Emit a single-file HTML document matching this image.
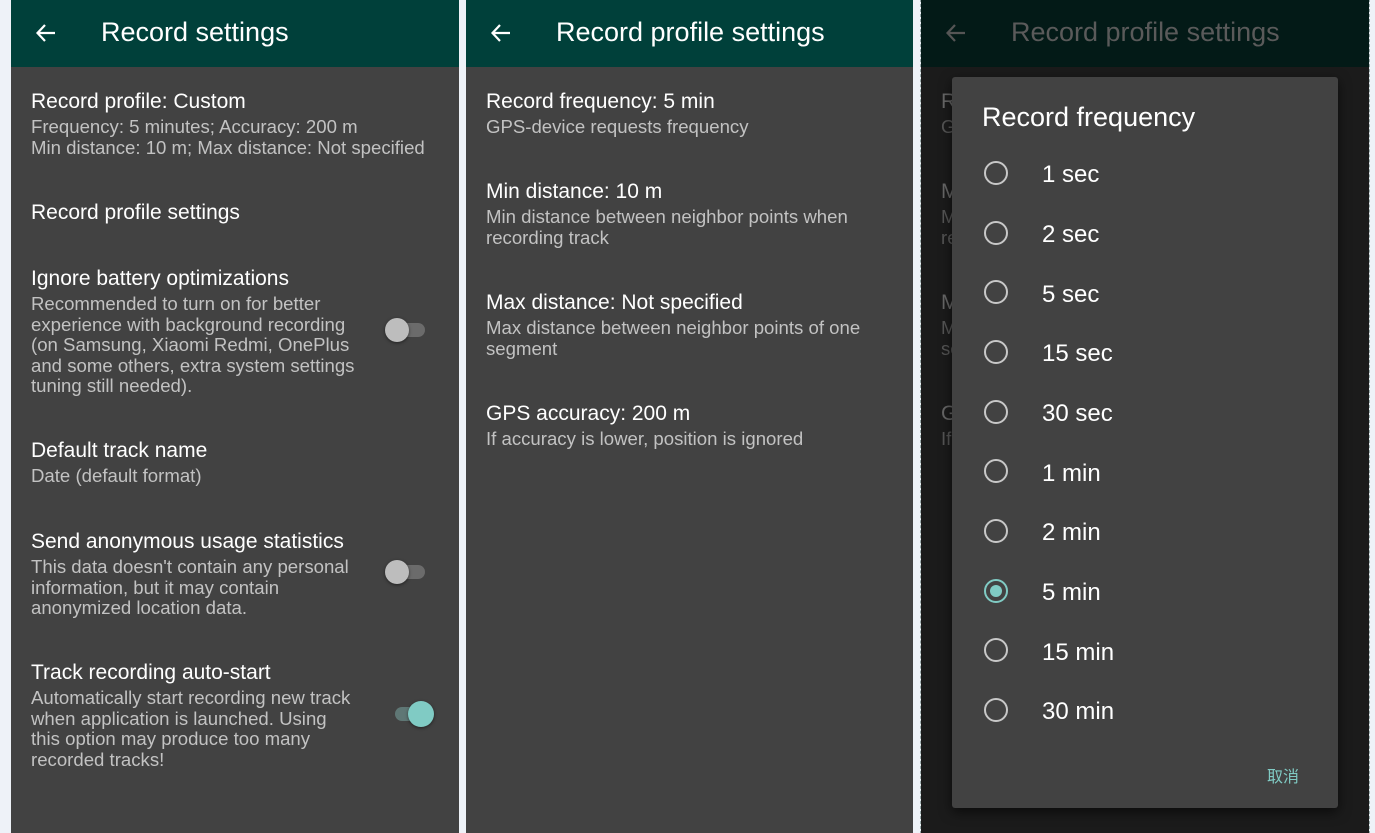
<!DOCTYPE html>
<html><head><meta charset="utf-8"><style>
*{margin:0;padding:0;box-sizing:border-box}
body{width:1375px;height:833px;background:#eef2f8;font-family:"Liberation Sans","Noto Sans CJK SC",sans-serif;position:relative;overflow:hidden}
.p{position:absolute;top:0;height:833px;background:#424242;overflow:hidden}
.h{position:absolute;left:0;right:0;top:0;height:67px;background:#00403a}
.h .t{position:absolute;left:90px;top:17px;font-size:27px;color:#fff}
.h svg{position:absolute;left:24px;top:22px}
.a{position:absolute;left:20px;color:#fff;font-size:21px;line-height:24px;white-space:nowrap}
.s{position:absolute;left:20px;color:#c2c2c2;font-size:18.6px;line-height:20.5px;white-space:nowrap}
.sw{position:absolute;width:34px;height:14px;border-radius:7px;background:#6b6b6b}
.sw i{position:absolute;top:-5px;width:24px;height:24px;border-radius:50%;background:#bdbdbd;box-shadow:0 1px 3px rgba(0,0,0,.5)}
.r{position:absolute;left:32px;width:24px;height:24px;border-radius:50%;border:2.5px solid #c8c8c8}
.rl{position:absolute;left:90px;font-size:24px;color:#fff}
</style></head><body>

<div class="p" style="left:11px;width:448px">
<div class="h"><svg width="22" height="22" viewBox="0 0 22 22"><path d="M20 11H3M10 3L2.5 11L10 19" stroke="#fff" stroke-width="2.2" fill="none"/></svg><div class="t">Record settings</div></div>
<div class="a" style="top:90px">Record profile: Custom</div>
<div class="s" style="top:117px">Frequency: 5 minutes; Accuracy: 200 m<br>Min distance: 10 m; Max distance: Not specified</div>
<div class="a" style="top:201px">Record profile settings</div>
<div class="a" style="top:267px">Ignore battery optimizations</div>
<div class="s" style="top:294px">Recommended to turn on for better<br>experience with background recording<br>(on Samsung, Xiaomi Redmi, OnePlus<br>and some others, extra system settings<br>tuning still needed).</div>
<div class="sw" style="left:380px;top:323px"><i style="left:-6px"></i></div>
<div class="a" style="top:439px">Default track name</div>
<div class="s" style="top:466px">Date (default format)</div>
<div class="a" style="top:530px">Send anonymous usage statistics</div>
<div class="s" style="top:557px">This data doesn't contain any personal<br>information, but it may contain<br>anonymized location data.</div>
<div class="sw" style="left:380px;top:565px"><i style="left:-6px"></i></div>
<div class="a" style="top:661px">Track recording auto-start</div>
<div class="s" style="top:688px">Automatically start recording new track<br>when application is launched. Using<br>this option may produce too many<br>recorded tracks!</div>
<div class="sw" style="left:384px;top:707px;background:#5f7775"><i style="left:13px;top:-6px;width:26px;height:26px;background:#80cbc4"></i></div>
</div>

<div class="p" style="left:466px;width:447px">
<div class="h"><svg width="22" height="22" viewBox="0 0 22 22"><path d="M20 11H3M10 3L2.5 11L10 19" stroke="#fff" stroke-width="2.2" fill="none"/></svg><div class="t">Record profile settings</div></div>
<div class="a" style="top:90px">Record frequency: 5 min</div>
<div class="s" style="top:117px">GPS-device requests frequency</div>
<div class="a" style="top:180px">Min distance: 10 m</div>
<div class="s" style="top:207px">Min distance between neighbor points when<br>recording track</div>
<div class="a" style="top:291px">Max distance: Not specified</div>
<div class="s" style="top:318px">Max distance between neighbor points of one<br>segment</div>
<div class="a" style="top:402px">GPS accuracy: 200 m</div>
<div class="s" style="top:429px">If accuracy is lower, position is ignored</div>
</div>

<div class="p" style="left:921px;width:448px;background:#1b1b1b;outline:1px dashed #9aa">
<div class="h" style="background:#031a17"><svg width="22" height="22" viewBox="0 0 22 22"><path d="M20 11H3M10 3L2.5 11L10 19" stroke="#555" stroke-width="2.2" fill="none"/></svg><div class="t" style="color:#5a5a5a">Record profile settings</div></div>
<div class="a" style="top:90px;color:#666">R</div><div class="s" style="top:117px;color:#555">G</div>
<div class="a" style="top:180px;color:#666">M</div><div class="s" style="top:207px;color:#555">M<br>re</div>
<div class="a" style="top:291px;color:#666">M</div><div class="s" style="top:318px;color:#555">M<br>se</div>
<div class="a" style="top:402px;color:#666">G</div><div class="s" style="top:429px;color:#555">If</div>
<div style="position:absolute;left:31px;top:77px;width:386px;height:731px;background:#424242;border-radius:3px;box-shadow:0 4px 12px rgba(0,0,0,.6)">
<div style="position:absolute;left:30px;top:25px;font-size:27px;color:#fff">Record frequency</div>
<div class="r" style="top:84px"></div><div class="rl" style="top:84px">1 sec</div>
<div class="r" style="top:144px"></div><div class="rl" style="top:144px">2 sec</div>
<div class="r" style="top:203px"></div><div class="rl" style="top:204px">5 sec</div>
<div class="r" style="top:263px"></div><div class="rl" style="top:263px">15 sec</div>
<div class="r" style="top:323px"></div><div class="rl" style="top:323px">30 sec</div>
<div class="r" style="top:382px"></div><div class="rl" style="top:383px">1 min</div>
<div class="r" style="top:442px"></div><div class="rl" style="top:442px">2 min</div>
<div class="r" style="top:502px;border-color:#80cbc4"><i style="position:absolute;left:3.5px;top:3.5px;width:12px;height:12px;border-radius:50%;background:#80cbc4"></i></div><div class="rl" style="top:502px">5 min</div>
<div class="r" style="top:561px"></div><div class="rl" style="top:562px">15 min</div>
<div class="r" style="top:621px"></div><div class="rl" style="top:621px">30 min</div>
<div style="position:absolute;left:315px;top:686px;font-size:16px;color:#80cbc4">取消</div>
</div>
</div>
</body></html>
